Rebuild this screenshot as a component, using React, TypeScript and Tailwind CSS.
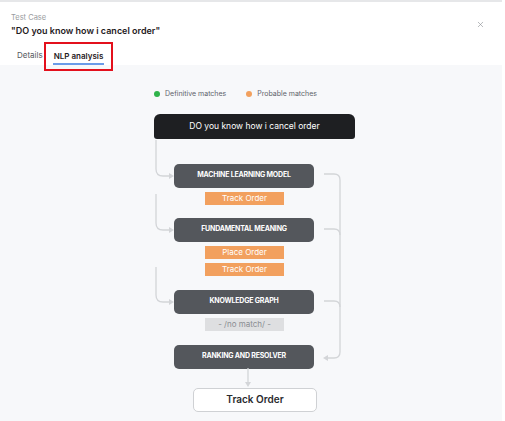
import { X } from "lucide-react";

const font = { fontFamily: "Inter, 'Noto Sans', sans-serif" };

function StepBox({ label, className = "" }: { label: string; className?: string }) {
  return (
    <div
      className={`ml-[20px] flex h-[24px] w-[140px] items-center justify-center rounded-[5px] bg-[#54575c] text-[7px] font-bold uppercase tracking-[-0.2px] text-white ${className}`}
    >
      {label}
    </div>
  );
}

function Tag({ label, muted = false, className = "" }: { label: string; muted?: boolean; className?: string }) {
  return (
    <div
      className={`ml-[51px] flex h-[13px] w-[79px] items-center justify-center text-[8px] ${
        muted ? "bg-[#dedfe1] text-[#8a8d92]" : "bg-[#f2a05e] text-white"
      } ${className}`}
    >
      {label}
    </div>
  );
}

function Connectors() {
  const stroke = "#d3d5d8";
  return (
    <svg
      className="pointer-events-none absolute left-0 top-0"
      width="220"
      height="300"
      viewBox="0 0 220 300"
      fill="none"
    >
      {/* left branches: origin is the black box top-left (154,115) */}
      <g stroke={stroke} strokeWidth="1.3">
        <path d="M2 26 V55 Q2 62 9 62 H16" />
        <path d="M2 80 V109 Q2 116 9 116 H16" />
        <path d="M2 153 V181 Q2 188 9 188 H16" />
        {/* right side */}
        <path d="M170 60 H180 Q186 60 186 66 V238 Q186 244 180 244 H172" />
        <path d="M170 115 H180 Q186 115 186 121" />
        <path d="M170 187 H180 Q186 187 186 193" />
        {/* down arrow */}
        <path d="M94 254 V269" />
      </g>
      <g fill={stroke}>
        <path d="M20 62 L15 59 L15 65 Z" />
        <path d="M20 116 L15 113 L15 119 Z" />
        <path d="M20 188 L15 185 L15 191 Z" />
        <path d="M169 244 L174 241 L174 247 Z" />
        <path d="M94 273 L91 268 L97 268 Z" />
      </g>
    </svg>
  );
}

export default function App() {
  return (
    <div className="relative h-[421px] w-[505px] overflow-hidden bg-white" style={font}>
      <div className="h-[2px] w-[502px] bg-[#e6e7e9]" />

      {/* header */}
      <div className="flex items-start justify-between pl-[11px] pr-[20px] pt-[11px]">
        <div>
          <div className="text-[7.5px] leading-[10px] text-[#9a9ca0]">Test Case</div>
          <div className="mt-[1px] text-[9px] font-semibold leading-[13px] text-[#1f2023]">
            "DO you know how i cancel order"
          </div>
        </div>
        <X className="mt-[7px] h-[9px] w-[9px] text-[#8a8d92]" strokeWidth={1.6} />
      </div>

      {/* tabs */}
      <div className="mt-[12px] flex items-end gap-[10px] pl-[17px] text-[8px]">
        <div className="pb-[4px] leading-[12px] text-[#55585d]">Details</div>
        <div className="border-b-2 border-[#6b9be8] px-[1px] pb-[1px] font-semibold leading-[12px] text-[#1f2023]">
          NLP analysis
        </div>
      </div>

      {/* annotation box */}
      <div className="absolute left-[44px] top-[42px] h-[29px] w-[69px] border-2 border-[#e3101c]" />

      {/* canvas */}
      <div className="h-[358px] w-[502px] bg-[#f7f8fa] pt-[24px]">
        <div className="ml-[154px] flex items-center text-[7px] text-[#60636a]">
          <span className="h-[6px] w-[6px] rounded-full bg-[#2fb34a]" />
          <span className="ml-[5px]">Definitive matches</span>
          <span className="ml-[20px] h-[6px] w-[6px] rounded-full bg-[#f2a05e]" />
          <span className="ml-[5px]">Probable matches</span>
        </div>

        <div className="relative ml-[154px] mt-[14px] w-[202px]">
          <Connectors />
          <div className="flex h-[25px] w-[201px] items-center justify-center rounded-t-[6px] rounded-b-[3px] bg-[#1e1f22] text-[8.5px] text-white">
            DO you know how i cancel order
          </div>

          <StepBox label="Machine learning model" className="mt-[25px]" />
          <Tag label="Track Order" className="mt-[4px]" />

          <StepBox label="Fundamental meaning" className="mt-[13px]" />
          <Tag label="Place Order" className="mt-[4px]" />
          <Tag label="Track Order" className="mt-[4px]" />

          <StepBox label="Knowledge graph" className="mt-[14px]" />
          <Tag label="- /no match/ -" muted className="mt-[4px]" />

          <StepBox label="Ranking and resolver" className="mt-[14px] ml-[19px]" />

          <div className="ml-[39px] mt-[19px] flex h-[24px] w-[124px] items-center justify-center rounded-[5px] border border-[#cfd1d4] bg-white text-[10px] font-semibold text-[#2a2b2e]">
            Track Order
          </div>
        </div>
      </div>
    </div>
  );
}
